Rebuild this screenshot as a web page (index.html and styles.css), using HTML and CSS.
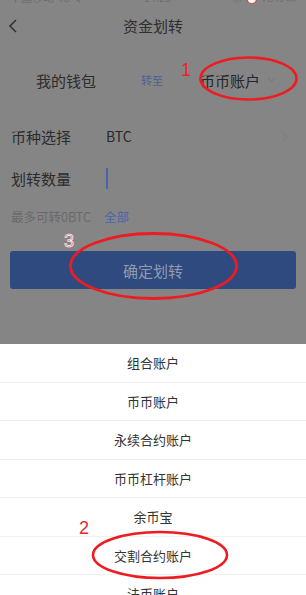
FILE: index.html
```html
<html>
<head>
    <meta charset="utf-8">
    <meta name="viewport" content="width=device-width,initial-scale=1">
    <title>资金划转</title>
    <link rel="stylesheet" href="styles.css">
</head>
<body>
<div class="screen">
    <div class="dim">
        <div class="status">
            <span>中国移动 4G 令</span>
            <span>14:25</span>
            <span>◎ ⏰ 78% ▭</span>
        </div>
        <div class="nav">
            <svg class="back" width="10" height="14" viewBox="0 0 10 14"><path d="M8 1 L2 7 L8 13" fill="none" stroke="#333" stroke-width="1.6"/></svg>
            <div class="title">资金划转</div>
        </div>

        <div class="wallet-row">
            <span class="from">我的钱包</span>
            <span class="to-label">转至</span>
            <span class="target">币币账户
                <svg width="9" height="6" viewBox="0 0 9 6"><path d="M1 1 L4.5 4.5 L8 1" fill="none" stroke="#777" stroke-width="1"/></svg>
            </span>
        </div>

        <div class="field">
            <span class="label">币种选择</span>
            <span class="value">BTC</span>
            <svg class="arrow" width="6" height="11" viewBox="0 0 6 11"><path d="M1 1 L5 5.5 L1 10" fill="none" stroke="#7a7a7a" stroke-width="1"/></svg>
        </div>
        <div class="field">
            <span class="label">划转数量</span>
            <span class="cursor"></span>
        </div>
        <div class="hint">最多可转0BTC<a>全部</a></div>

        <div class="btn">确定划转</div>
    </div>

    <ul class="sheet">
        <li>组合账户</li>
        <li>币币账户</li>
        <li>永续合约账户</li>
        <li>币币杠杆账户</li>
        <li>余币宝</li>
        <li>交割合约账户</li>
        <li>法币账户</li>
    </ul>

    <svg class="marks" width="306" height="595" viewBox="0 0 306 595">
        <ellipse cx="248.5" cy="78.5" rx="48" ry="21" fill="none" stroke="#ee1c22" stroke-width="2.6"/>
        <ellipse cx="153.5" cy="266" rx="83" ry="32.5" fill="none" stroke="#ee1c22" stroke-width="2.8"/>
        <ellipse cx="160" cy="555" rx="67" ry="23" fill="none" stroke="#ee1c22" stroke-width="2.6"/>
        <text x="181" y="76" class="num">1</text>
        <text x="64" y="247" class="num three">3</text>
        <text x="79" y="534" class="num">2</text>
    </svg>
</div>
</body>
</html>
```

FILE: styles.css
```css
* {
    font-family: "Noto Sans CJK SC", "Noto Sans", sans-serif;
    box-sizing: border-box;
}

body {
    margin: 0;
    padding: 0;
    background-color: #ffffff;
}

.screen {
    position: relative;
    width: 306px;
    height: 595px;
    overflow: hidden;
}

.dim {
    height: 344px;
    padding-bottom: 1px;
    background-color: #858585;
    color: #2c2c2c;
}

.status {
    display: flex;
    justify-content: space-between;
    height: 5px;
    overflow: hidden;
    padding: 0 10px;
    font-size: 11px;
    line-height: 0;
    color: #6e6e6e;
}

.status span {
    margin-top: -3px;
}

.nav {
    display: flex;
    align-items: center;
    justify-content: center;
    position: relative;
    height: 40px;
}

.back {
    position: absolute;
    left: 8px;
    top: 14px;
}

.title {
    font-size: 15px;
    color: #2e2e2e;
}

.wallet-row {
    display: flex;
    align-items: center;
    height: 70px;
    padding-left: 36px;
    font-size: 15px;
}

.to-label {
    margin-left: 45px;
    font-size: 11px;
    color: #4c5f96;
}

.target {
    display: flex;
    align-items: center;
    gap: 7px;
    margin-left: 37px;
    color: #262626;
}

.field {
    display: flex;
    align-items: center;
    height: 42px;
    padding: 0 18px 0 11px;
    font-size: 15px;
}

.label {
    width: 95px;
}

.value {
    font-size: 14px;
    color: #2a2a2a;
}

.arrow {
    margin-left: auto;
}

.cursor {
    width: 2px;
    height: 21px;
    background-color: #4666a8;
}

.hint {
    height: 26px;
    padding: 8px 0 0 11px;
    font-size: 12.5px;
    line-height: 20px;
    color: #6a6a6a;
}

.hint a {
    margin-left: 13px;
    color: #4a64a6;
}

.btn {
    display: flex;
    align-items: center;
    justify-content: center;
    height: 38px;
    margin: 26px 10px 0 10px;
    border-radius: 3px;
    background-color: #2e4a7e;
    color: #929cb0;
    font-size: 15px;
}

.sheet {
    list-style: none;
    margin: 0;
    padding: 0;
    background-color: #ffffff;
}

.sheet li {
    display: flex;
    align-items: center;
    justify-content: center;
    height: 38.5px;
    border-bottom: 1px solid #f0f0f0;
    font-size: 13px;
    color: #333333;
}

.marks {
    position: absolute;
    left: 0;
    top: 0;
}

.num {
    font-family: "Liberation Sans", sans-serif;
    font-size: 18px;
    fill: #e8262c;
}

.three {
    fill: #f06a6a;
    stroke: #ffffff;
    stroke-width: 0.6;
}
```
